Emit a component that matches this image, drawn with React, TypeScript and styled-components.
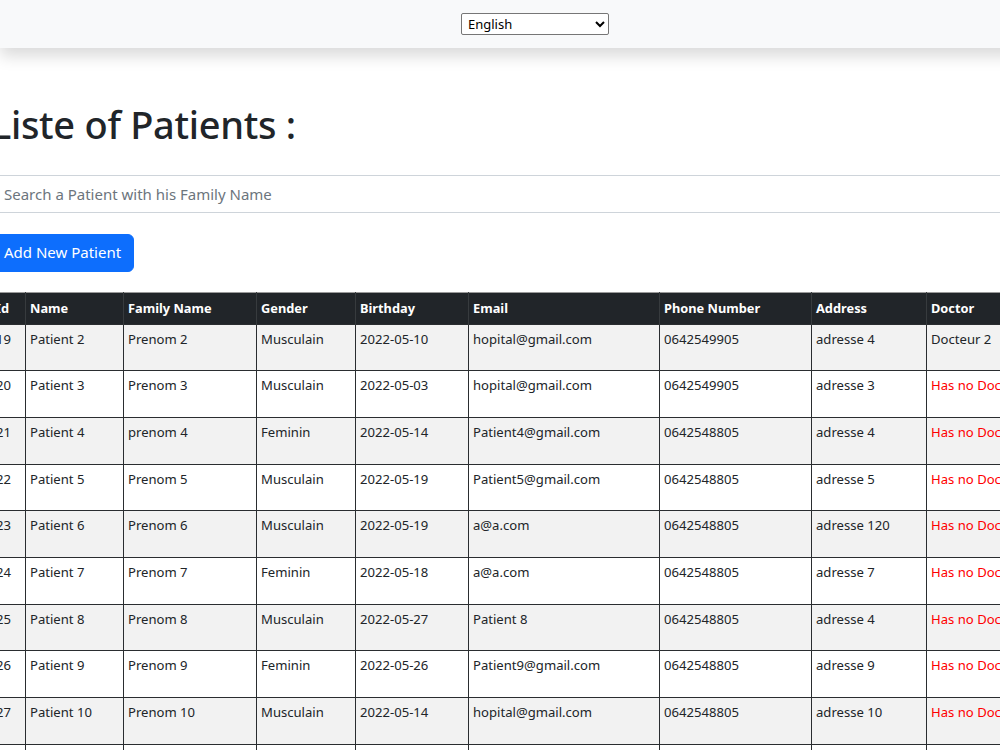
import React from "react";
import styled, { createGlobalStyle } from "styled-components";

const GlobalStyle = createGlobalStyle`
  html { overflow: hidden; }
  body {
    margin: 0;
    background: #ffffff;
    color: #212529;
    font-family: "Noto Sans", "Open Sans", sans-serif;
    font-size: 16px;
    line-height: 1.5;
  }
  * { box-sizing: border-box; }
`;

const Navbar = styled.nav`
  width: 1070px;
  height: 48px;
  background: #f8f9fa;
  box-shadow: 0 8px 16px rgba(0, 0, 0, 0.15);
  display: flex;
  justify-content: center;
  align-items: flex-start;
  padding-top: 13px;
  position: relative;
  z-index: 1;
`;

const LangSelect = styled.select`
  width: 148px;
  height: 22px;
  font-family: "Noto Sans", sans-serif;
  font-size: 13px;
  color: #000;
  background: #fff;
  border: 1px solid #767676;
  border-radius: 2px;
  padding: 0 2px;
`;

const Main = styled.main`
  margin-left: -9px;
  width: 1100px;
  padding-top: 54px;
  display: flex;
  flex-direction: column;
  align-items: flex-start;
`;

const Title = styled.h1`
  margin: 0 0 27px 0;
  font-size: 38px;
  font-weight: 500;
  line-height: 1.2;
  color: #212529;
  letter-spacing: -0.3px;
`;

const SearchInput = styled.input`
  width: 100%;
  height: 38px;
  padding: 6px 12px;
  font-family: "Noto Sans", sans-serif;
  font-size: 15px;
  color: #212529;
  border: 1px solid #ced4da;
  border-radius: 6px;
  margin-bottom: 21px;
  &::placeholder { color: #6c757d; }
`;

const PrimaryButton = styled.button`
  height: 38px;
  width: 143px;
  padding: 6px 12px;
  border: 1px solid #0d6efd;
  border-radius: 6px;
  background: #0d6efd;
  color: #fff;
  font-family: "Noto Sans", sans-serif;
  font-size: 15px;
  line-height: 1.5;
  text-align: left;
  margin-bottom: 20px;
  white-space: nowrap;
`;

const Table = styled.table`
  border-collapse: collapse;
  table-layout: fixed;
  width: 1085px;
  font-size: 13.1px;
  line-height: 1.5;
  border-top: 1px solid #9a9a9a;
`;

const HeadRow = styled.tr`
  height: 32px;
  background: #212529;
`;

const Th = styled.th`
  color: #fff;
  font-size: 12.8px;
  font-weight: 700;
  text-align: left;
  padding: 5px 4px 4px;
  border-left: 1px solid #373b3e;
  border-right: 1px solid #373b3e;
  white-space: nowrap;
  overflow: hidden;
  vertical-align: middle;
`;

const BodyRow = styled.tr<{ $striped: boolean }>`
  height: 46.67px;
  background: ${(p) => (p.$striped ? "#f2f2f2" : "#ffffff")};
`;

const Td = styled.td<{ $alert?: boolean }>`
  padding: 5px 4px 4px;
  vertical-align: top;
  border: 1px solid #2a2d30;
  color: ${(p) => (p.$alert ? "#ff0000" : "#212529")};
  white-space: nowrap;
  overflow: hidden;
`;

const widths = [34, 98, 133, 99, 113, 191, 152, 115, 150];
const headers = ["Id", "Name", "Family Name", "Gender", "Birthday", "Email", "Phone Number", "Address", "Doctor"];

type Patient = {
  id: number;
  name: string;
  family: string;
  gender: string;
  birthday: string;
  email: string;
  phone: string;
  address: string;
  doctor: string | null;
};

const patients: Patient[] = [
  { id: 19, name: "Patient 2", family: "Prenom 2", gender: "Musculain", birthday: "2022-05-10", email: "hopital@gmail.com", phone: "0642549905", address: "adresse 4", doctor: "Docteur 2" },
  { id: 20, name: "Patient 3", family: "Prenom 3", gender: "Musculain", birthday: "2022-05-03", email: "hopital@gmail.com", phone: "0642549905", address: "adresse 3", doctor: null },
  { id: 21, name: "Patient 4", family: "prenom 4", gender: "Feminin", birthday: "2022-05-14", email: "Patient4@gmail.com", phone: "0642548805", address: "adresse 4", doctor: null },
  { id: 22, name: "Patient 5", family: "Prenom 5", gender: "Musculain", birthday: "2022-05-19", email: "Patient5@gmail.com", phone: "0642548805", address: "adresse 5", doctor: null },
  { id: 23, name: "Patient 6", family: "Prenom 6", gender: "Musculain", birthday: "2022-05-19", email: "a@a.com", phone: "0642548805", address: "adresse 120", doctor: null },
  { id: 24, name: "Patient 7", family: "Prenom 7", gender: "Feminin", birthday: "2022-05-18", email: "a@a.com", phone: "0642548805", address: "adresse 7", doctor: null },
  { id: 25, name: "Patient 8", family: "Prenom 8", gender: "Musculain", birthday: "2022-05-27", email: "Patient 8", phone: "0642548805", address: "adresse 4", doctor: null },
  { id: 26, name: "Patient 9", family: "Prenom 9", gender: "Feminin", birthday: "2022-05-26", email: "Patient9@gmail.com", phone: "0642548805", address: "adresse 9", doctor: null },
  { id: 27, name: "Patient 10", family: "Prenom 10", gender: "Musculain", birthday: "2022-05-14", email: "hopital@gmail.com", phone: "0642548805", address: "adresse 10", doctor: null },
  { id: 28, name: "Patient 11", family: "Prenom 11", gender: "Feminin", birthday: "2022-05-20", email: "hopital@gmail.com", phone: "0642548805", address: "adresse 11", doctor: null },
];

export default function App() {
  return (
    <>
      <GlobalStyle />
      <Navbar>
        <LangSelect defaultValue="en">
          <option value="en">English</option>
          <option value="fr">Français</option>
        </LangSelect>
      </Navbar>
      <Main>
        <Title>Liste of Patients :</Title>
        <SearchInput placeholder="Search a Patient with his Family Name" />
        <PrimaryButton>Add New Patient</PrimaryButton>
        <Table>
          <colgroup>
            {widths.map((w, i) => (
              <col key={i} style={{ width: w }} />
            ))}
          </colgroup>
          <thead>
            <HeadRow>
              {headers.map((h) => (
                <Th key={h}>{h}</Th>
              ))}
            </HeadRow>
          </thead>
          <tbody>
            {patients.map((p, i) => (
              <BodyRow key={p.id} $striped={i % 2 === 0}>
                <Td>{p.id}</Td>
                <Td>{p.name}</Td>
                <Td>{p.family}</Td>
                <Td>{p.gender}</Td>
                <Td>{p.birthday}</Td>
                <Td>{p.email}</Td>
                <Td>{p.phone}</Td>
                <Td>{p.address}</Td>
                <Td $alert={!p.doctor}>{p.doctor ?? "Has no Doctor"}</Td>
              </BodyRow>
            ))}
          </tbody>
        </Table>
      </Main>
    </>
  );
}
